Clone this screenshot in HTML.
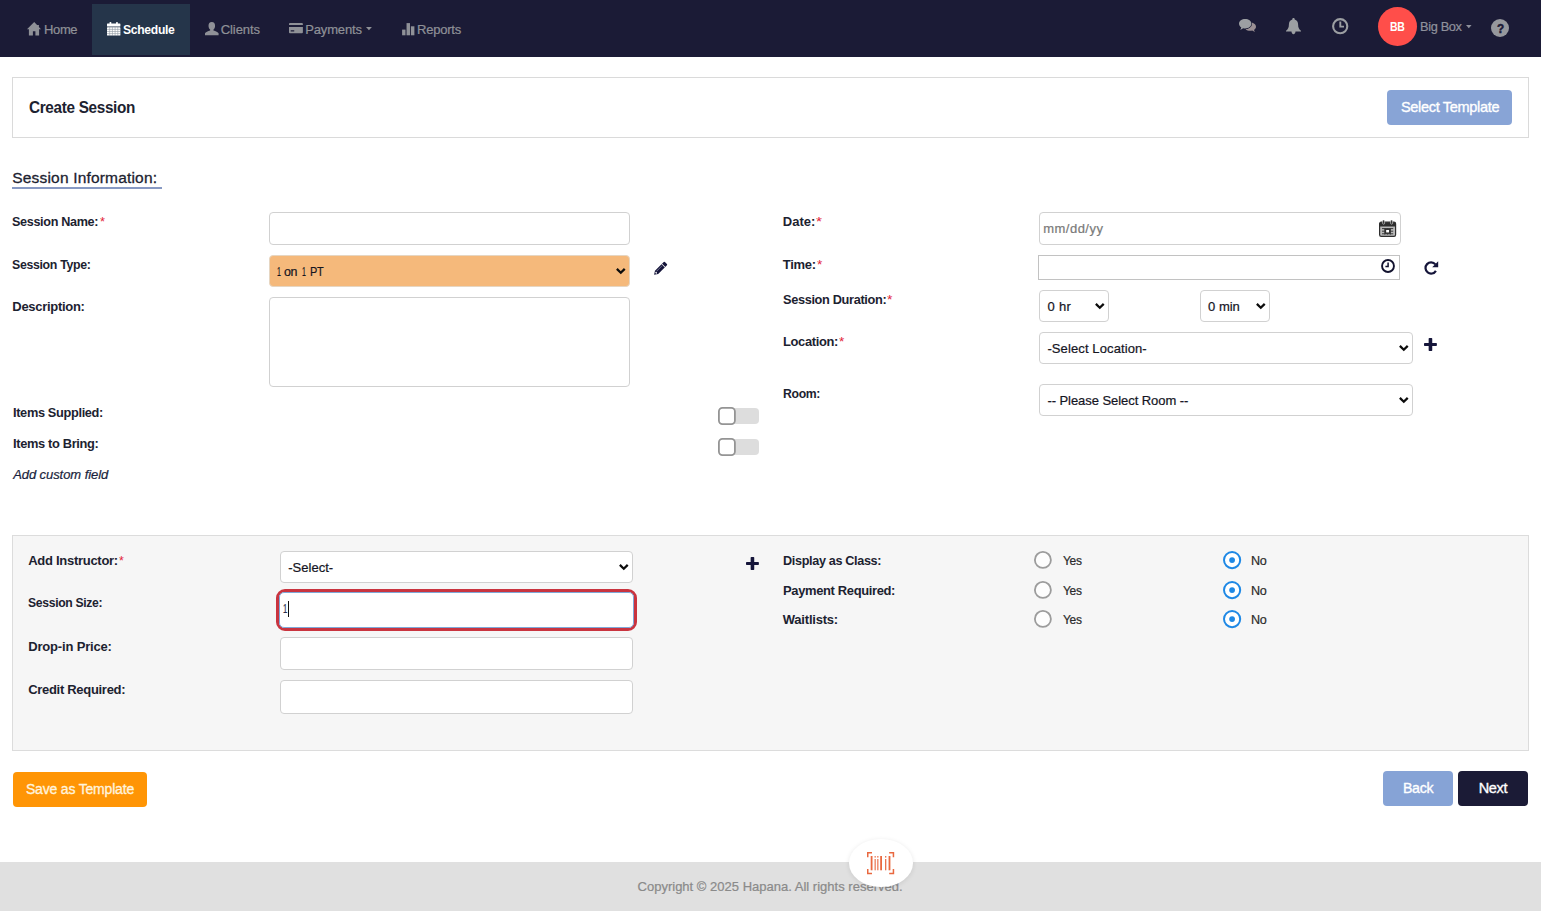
<!DOCTYPE html>
<html lang="en">
<head>
<meta charset="utf-8">
<title>Create Session</title>
<style>
*{box-sizing:border-box;margin:0;padding:0}
html,body{width:1541px;height:911px;overflow:hidden;background:#fff}
body{font-family:"Liberation Sans",sans-serif;color:#1c2230;position:relative}
.abs{position:absolute}
.t{position:absolute;white-space:nowrap;line-height:1;display:block}
.box{position:absolute;background:#fff;border:1px solid #d1d1d1;border-radius:4px}
svg{position:absolute;display:block;overflow:visible}
#nav{position:absolute;left:0;top:0;width:1541px;height:57px;background:#1b1b36}
</style>
</head>
<body>
<div id="nav"></div>
<div class="abs" style="left:92px;top:4px;width:98px;height:51px;background:#25354a"></div>
<svg style="left:27px;top:21.6px" width="14" height="13.5" viewBox="0 0 14 13.5"><path fill="#8f9197" d="M7.2 0 L0 7.2 L1.9 7.2 L1.9 13.5 L5.9 13.5 L5.9 9.2 L8.4 9.2 L8.4 13.5 L12.1 13.5 L12.1 7.2 L14 7.2 L11.9 4.9 L11.9 3.1 L10.3 3.1 L10.3 3.2 Z"/></svg>
<span class="t" style="left:43.50px;top:23.2px;font-size:13px;letter-spacing:-0.35px;transform:scaleX(0.999);transform-origin:0 0;color:#8f9197;-webkit-text-stroke:0.22px #8f9197;">Home</span>
<svg style="left:106.8px;top:21.5px" width="13.4" height="13.6" viewBox="0 0 13.4 13.6"><g fill="#fff"><rect x="0" y="1.4" width="13.4" height="3.2" rx="0.6"/><rect x="2.6" y="0" width="1.7" height="2.6" rx="0.6"/><rect x="9.1" y="0" width="1.7" height="2.6" rx="0.6"/><rect x="0" y="5.3" width="13.4" height="8.3" rx="0.6"/></g><g stroke="#25354a" stroke-width="0.6" opacity="0.5"><path d="M0 7.4H13.4M0 9.5H13.4M0 11.6H13.4M2.7 5.3V13.6M5.4 5.3V13.6M8.1 5.3V13.6M10.8 5.3V13.6"/></g></svg>
<span class="t" style="left:123.20px;top:23.2px;font-size:13px;letter-spacing:-0.35px;transform:scaleX(0.936);transform-origin:0 0;font-weight:bold;color:#ffffff;">Schedule</span>
<svg style="left:204.5px;top:21.8px" width="13.6" height="13.25" viewBox="0 0 13.5 13.6" preserveAspectRatio="none"><path fill="#8f9197" d="M6.75 0 C9 0 10 1.8 10 3.8 C10 5.6 9.3 7 8.4 7.8 L8.4 8.8 C10.5 9.6 13 10.3 13.5 11.6 L13.5 13.6 L0 13.6 L0 11.6 C0.5 10.3 3 9.6 5.1 8.8 L5.1 7.8 C4.2 7 3.5 5.6 3.5 3.8 C3.5 1.8 4.5 0 6.75 0 Z"/></svg>
<span class="t" style="left:220.70px;top:23.2px;font-size:13px;letter-spacing:-0.07px;color:#8f9197;-webkit-text-stroke:0.22px #8f9197;">Clients</span>
<svg style="left:289.2px;top:22.9px" width="13.9" height="10.2" viewBox="0 0 13.8 10.4" preserveAspectRatio="none"><path fill="#8f9197" d="M0.9 0 H12.9 Q13.8 0 13.8 0.9 V2 H0 V0.9 Q0 0 0.9 0 Z M0 4.1 H13.8 V9.5 Q13.8 10.4 12.9 10.4 H0.9 Q0 10.4 0 9.5 Z M1.7 7.4 V8.8 H5.2 V7.4 Z"/></svg>
<span class="t" style="left:305.30px;top:23.2px;font-size:13px;letter-spacing:-0.17px;color:#8f9197;-webkit-text-stroke:0.22px #8f9197;">Payments</span>
<svg style="left:365.5px;top:26.9px" width="5.9" height="3.3" viewBox="0 0 5.8 3.2" preserveAspectRatio="none"><path fill="#8f9197" d="M0 0H5.8L2.9 3.2Z"/></svg>
<svg style="left:401.8px;top:22.8px" width="12.4" height="12.3" viewBox="0 0 12.4 12.3"><g fill="#8f9197"><rect x="0.1" y="6.6" width="3.4" height="5.7"/><rect x="4.55" y="0.1" width="3.45" height="12.2"/><rect x="8.9" y="3.3" width="3.5" height="9"/></g></svg>
<span class="t" style="left:417.00px;top:23.2px;font-size:13px;letter-spacing:-0.22px;color:#8f9197;-webkit-text-stroke:0.22px #8f9197;">Reports</span>
<svg style="left:1239px;top:19px" width="17" height="13.2" viewBox="0 0 17 13.2"><path fill="#9a8f93" d="M11.2 3.6 C14.4 3.6 17 5.4 17 7.7 C17 9 16.2 10.1 15 10.9 L15.9 13 L13.2 11.6 C12.6 11.7 11.9 11.8 11.2 11.8 C9.3 11.8 7.6 11.2 6.6 10.2 C10 9.8 12.4 7.6 12.4 5 C12.4 4.5 12.3 4 12.1 3.6 Z"/><path fill="#9c9fa2" stroke="#1b1b36" stroke-width="1.3" paint-order="stroke" d="M6.2 0 C9.6 0 12.4 2.1 12.4 4.7 C12.4 7.3 9.6 9.4 6.2 9.4 C5.5 9.4 4.8 9.3 4.2 9.2 L1.3 10.9 L2.3 8.4 C0.9 7.5 0 6.2 0 4.7 C0 2.1 2.8 0 6.2 0 Z"/></svg>
<svg style="left:1286px;top:17.8px" width="15" height="16.2" viewBox="0 0 15 16.2"><path fill="#9c9fa2" d="M7.5 0 C8.2 0 8.7 0.5 8.7 1.2 L8.7 1.5 C10.9 2.1 12.1 4 12.1 6.6 C12.1 9.8 13.2 11.6 15 12.8 L15 13.6 L9.5 13.6 C9.5 15 8.7 16.2 7.5 16.2 C6.3 16.2 5.5 15 5.5 13.6 L0 13.6 L0 12.8 C1.8 11.6 2.9 9.8 2.9 6.6 C2.9 4 4.1 2.1 6.3 1.5 L6.3 1.2 C6.3 0.5 6.8 0 7.5 0 Z"/></svg>
<svg style="left:1331.5px;top:17.8px" width="16.4" height="16.4" viewBox="0 0 16.4 16.4"><circle cx="8.2" cy="8.2" r="7.1" fill="none" stroke="#9c9fa2" stroke-width="2.1"/><path d="M8.3 3.6V8.6H12" fill="none" stroke="#9c9fa2" stroke-width="1.9"/></svg>
<div class="abs" style="left:1378px;top:7px;width:39px;height:39px;border-radius:50%;background:#ff4e4a"></div>
<span class="t" style="left:1389.80px;top:19.9px;font-size:13px;letter-spacing:-0.35px;transform:scaleX(0.809);transform-origin:0 0;font-weight:bold;color:#ffffff;">BB</span>
<span class="t" style="left:1419.90px;top:19.9px;font-size:13px;letter-spacing:-0.35px;transform:scaleX(0.984);transform-origin:0 0;color:#8f919c;-webkit-text-stroke:0.22px #8f919c;">Big Box</span>
<svg style="left:1465.6px;top:25.1px" width="5.6" height="3.2" viewBox="0 0 5.6 3.2"><path fill="#8f919c" d="M0 0H5.6L2.8 3.2Z"/></svg>
<div class="abs" style="left:1491px;top:19px;width:18.40000000000009px;height:18.4px;border-radius:50%;background:#96989d"></div>
<span class="t" style="left:1496.60px;top:21.8px;font-size:13px;letter-spacing:0.00px;transform:scaleX(0.906);transform-origin:0 0;font-weight:bold;color:#1b1b36;-webkit-text-stroke:0.5px #1b1b36;">?</span>
<div class="abs" style="left:12px;top:77px;width:1517px;height:61px;border:1px solid #dadada;background:#fff"></div>
<span class="t" style="left:28.60px;top:99.2px;font-size:16.5px;letter-spacing:-0.35px;transform:scaleX(0.928);transform-origin:0 0;font-weight:bold;color:#1c2230;">Create Session</span>
<div class="abs" style="left:1387px;top:90px;width:125px;height:35px;border-radius:4px;background:#88a4d6"></div>
<span class="t" style="left:1400.50px;top:99.2px;font-size:15px;letter-spacing:-0.35px;transform:scaleX(0.970);transform-origin:0 0;color:#ffffff;-webkit-text-stroke:0.35px #fff;">Select Template</span>
<span class="t" style="left:12.30px;top:170.1px;font-size:15.5px;letter-spacing:0.18px;color:#1c2230;-webkit-text-stroke:0.3px #1c2230;">Session Information:</span>
<div class="abs" style="left:12px;top:186.8px;width:149.8px;height:2.0px;background:#8799c3"></div>
<span class="t" style="left:12.30px;top:214.9px;font-size:13px;letter-spacing:-0.35px;transform:scaleX(0.971);transform-origin:0 0;font-weight:bold;color:#1c2230;">Session Name:</span>
<span class="t" style="left:99.50px;top:215.2px;font-size:13px;letter-spacing:0.00px;transform:scaleX(0.989);transform-origin:0 0;color:#e3263a;">*</span>
<div class="box" style="left:269px;top:212px;width:361px;height:32.5px;"></div>
<span class="t" style="left:12.30px;top:258.1px;font-size:13px;letter-spacing:-0.35px;transform:scaleX(0.950);transform-origin:0 0;font-weight:bold;color:#1c2230;">Session Type:</span>
<div class="box" style="left:269px;top:255px;width:361px;height:32px;background:#f5b97b;border-color:#e6d6c2"></div>
<span class="t" style="left:277.30px;top:264.9px;font-size:13px;letter-spacing:0.00px;transform:scaleX(0.540);transform-origin:0 0;color:#15151f;-webkit-text-stroke:0.22px #15151f;">1</span>
<span class="t" style="left:284.40px;top:264.9px;font-size:13px;letter-spacing:-0.35px;transform:scaleX(0.957);transform-origin:0 0;color:#15151f;-webkit-text-stroke:0.22px #15151f;">on</span>
<span class="t" style="left:301.70px;top:264.9px;font-size:13px;letter-spacing:0.00px;transform:scaleX(0.540);transform-origin:0 0;color:#15151f;-webkit-text-stroke:0.22px #15151f;">1</span>
<span class="t" style="left:309.60px;top:264.9px;font-size:13px;letter-spacing:-0.35px;transform:scaleX(0.842);transform-origin:0 0;color:#15151f;-webkit-text-stroke:0.22px #15151f;">PT</span>
<svg style="left:615.7px;top:267.9px" width="9.6" height="6.2" viewBox="0 0 9.6 6.2"><path d="M0.85 0.95 L4.8 4.75 L8.75 0.95" fill="none" stroke="#0c0c0c" stroke-width="2.3"/></svg>
<svg style="left:650px;top:258px" width="22" height="20" viewBox="0 0 22 20"><g transform="translate(4.1,16.8) rotate(-45)"><path fill="#15153a" d="M0 0 L3.5 -2.25 H15.9 Q16.7 -2.25 16.7 -1.45 V1.45 Q16.7 2.25 15.9 2.25 H3.5 Z"/><ellipse cx="2.9" cy="0" rx="0.8" ry="0.9" fill="#fff"/><rect x="12.7" y="-2.4" width="0.8" height="4.8" fill="#fff"/><rect x="4.2" y="-1.0" width="8" height="0.55" fill="#8d8da8"/></g></svg>
<span class="t" style="left:12.30px;top:300.0px;font-size:13px;letter-spacing:-0.29px;font-weight:bold;color:#1c2230;">Description:</span>
<div class="box" style="left:269px;top:297px;width:361px;height:89.5px;"></div>
<span class="t" style="left:12.50px;top:405.7px;font-size:13px;letter-spacing:-0.35px;transform:scaleX(0.983);transform-origin:0 0;font-weight:bold;color:#1c2230;">Items Supplied:</span>
<span class="t" style="left:12.50px;top:436.8px;font-size:13px;letter-spacing:-0.35px;transform:scaleX(0.988);transform-origin:0 0;font-weight:bold;color:#1c2230;">Items to Bring:</span>
<span class="t" style="left:13.15px;top:467.6px;font-size:13px;letter-spacing:-0.07px;font-style:italic;color:#1a1f3d;-webkit-text-stroke:0.22px #1a1f3d;">Add custom field</span>
<div class="abs" style="left:720px;top:408.0px;width:39px;height:15.699999999999989px;border-radius:4px;background:#dddddd"></div>
<svg style="left:718px;top:406.9px" width="17.8" height="18.1" viewBox="0 0 17.8 18.1"><rect x="0.9" y="0.9" width="16" height="16.3" rx="3.6" fill="#fff" stroke="#949494" stroke-width="1.8"/></svg>
<div class="abs" style="left:720px;top:439.1px;width:39px;height:15.699999999999989px;border-radius:4px;background:#dddddd"></div>
<svg style="left:718px;top:438px" width="17.8" height="18.1" viewBox="0 0 17.8 18.1"><rect x="0.9" y="0.9" width="16" height="16.3" rx="3.6" fill="#fff" stroke="#949494" stroke-width="1.8"/></svg>
<span class="t" style="left:782.80px;top:214.9px;font-size:13px;letter-spacing:0.02px;font-weight:bold;color:#1c2230;">Date:</span>
<span class="t" style="left:816.20px;top:215.2px;font-size:13px;letter-spacing:0.00px;transform:scaleX(1.186);transform-origin:0 0;color:#e3263a;">*</span>
<div class="box" style="left:1039px;top:212px;width:361.5px;height:32.5px;"></div>
<span class="t" style="left:1043.20px;top:222.1px;font-size:13px;letter-spacing:0.49px;color:#7a7a7a;-webkit-text-stroke:0.22px #7a7a7a;">mm/dd/yy</span>
<svg style="left:1378.8px;top:219.8px" width="17.2" height="17" viewBox="0 0 17.2 17"><rect x="0.6" y="2.2" width="16" height="14.2" rx="1.6" fill="#b9b9b9" stroke="#2e2e2e" stroke-width="1.2"/><path d="M0.6 3.8 Q0.6 2.2 2.2 2.2 H15 Q16.6 2.2 16.6 3.8 V6.6 H0.6 Z" fill="#2e2e2e"/><rect x="3.6" y="0" width="2" height="4.2" rx="0.9" fill="#2e2e2e" stroke="#fff" stroke-width="0.5"/><rect x="11.6" y="0" width="2" height="4.2" rx="0.9" fill="#2e2e2e" stroke="#fff" stroke-width="0.5"/><path d="M3 8.6H14.2M3 11.2H14.2M3 13.8H14.2M5.8 8V14.6M8.6 8V14.6M11.4 8V14.6" stroke="#3a3a3a" stroke-width="1"/><rect x="6.5" y="9.3" width="4.2" height="3.8" fill="#fff" stroke="#2e2e2e" stroke-width="1.3"/></svg>
<span class="t" style="left:782.80px;top:258.1px;font-size:13px;letter-spacing:-0.28px;font-weight:bold;color:#1c2230;">Time:</span>
<span class="t" style="left:816.90px;top:258.4px;font-size:13px;letter-spacing:0.00px;transform:scaleX(1.048);transform-origin:0 0;color:#e3263a;">*</span>
<div class="abs" style="left:1038px;top:255px;width:362px;height:25px;border:1px solid #c2c2c2;border-radius:0;background:#fff"></div>
<svg style="left:1380.5px;top:259.2px" width="14" height="14" viewBox="0 0 14 14"><circle cx="7" cy="7" r="5.95" fill="none" stroke="#12122e" stroke-width="1.9"/><path d="M7.1 3.4V7.5H4.4" fill="none" stroke="#12122e" stroke-width="1.5"/></svg>
<svg style="left:1423.7px;top:261px" width="14.8" height="14" viewBox="0 0 14.8 14"><path d="M11.9 9.9 A5.6 5.6 0 1 1 11.4 3.4" fill="none" stroke="#15153a" stroke-width="2.2"/><path d="M14.2 0.2 V6.2 H8.2 Z" fill="#15153a"/></svg>
<span class="t" style="left:782.80px;top:292.8px;font-size:13px;letter-spacing:-0.35px;transform:scaleX(0.981);transform-origin:0 0;font-weight:bold;color:#1c2230;">Session Duration:</span>
<span class="t" style="left:887.20px;top:293.1px;font-size:13px;letter-spacing:0.00px;transform:scaleX(1.068);transform-origin:0 0;color:#e3263a;">*</span>
<div class="box" style="left:1039px;top:290px;width:69.59999999999991px;height:32px;"></div>
<span class="t" style="left:1047.50px;top:300.0px;font-size:13px;letter-spacing:0.33px;color:#15151f;-webkit-text-stroke:0.22px #15151f;">0 hr</span>
<svg style="left:1095.1px;top:303.1px" width="9.6" height="6.2" viewBox="0 0 9.6 6.2"><path d="M0.85 0.95 L4.8 4.75 L8.75 0.95" fill="none" stroke="#0c0c0c" stroke-width="2.3"/></svg>
<div class="box" style="left:1200.3px;top:290px;width:69.29999999999995px;height:32px;"></div>
<span class="t" style="left:1208.10px;top:300.0px;font-size:13px;letter-spacing:-0.02px;color:#15151f;-webkit-text-stroke:0.22px #15151f;">0 min</span>
<svg style="left:1255.9px;top:303.1px" width="9.6" height="6.2" viewBox="0 0 9.6 6.2"><path d="M0.85 0.95 L4.8 4.75 L8.75 0.95" fill="none" stroke="#0c0c0c" stroke-width="2.3"/></svg>
<span class="t" style="left:782.80px;top:334.9px;font-size:13px;letter-spacing:-0.35px;transform:scaleX(0.993);transform-origin:0 0;font-weight:bold;color:#1c2230;">Location:</span>
<span class="t" style="left:838.90px;top:335.2px;font-size:13px;letter-spacing:0.00px;transform:scaleX(1.048);transform-origin:0 0;color:#e3263a;">*</span>
<div class="box" style="left:1039px;top:332px;width:373.5999999999999px;height:32px;"></div>
<span class="t" style="left:1047.40px;top:342.0px;font-size:13px;letter-spacing:0.11px;color:#15151f;-webkit-text-stroke:0.22px #15151f;">-Select Location-</span>
<svg style="left:1398.9px;top:345.2px" width="9.6" height="6.2" viewBox="0 0 9.6 6.2"><path d="M0.85 0.95 L4.8 4.75 L8.75 0.95" fill="none" stroke="#0c0c0c" stroke-width="2.3"/></svg>
<svg style="left:1424.1px;top:338.2px" width="12.9" height="12.9" viewBox="0 0 12.9 12.9"><g fill="#15153a"><rect x="4.65" y="0" width="3.6" height="12.9" rx="0.7"/><rect x="0" y="4.9" width="12.9" height="3.1" rx="0.7"/></g></svg>
<span class="t" style="left:782.80px;top:386.9px;font-size:13px;letter-spacing:-0.35px;transform:scaleX(0.941);transform-origin:0 0;font-weight:bold;color:#1c2230;">Room:</span>
<div class="box" style="left:1039px;top:384px;width:373.5999999999999px;height:31.80000000000001px;"></div>
<span class="t" style="left:1047.40px;top:393.8px;font-size:13px;letter-spacing:-0.06px;color:#15151f;-webkit-text-stroke:0.22px #15151f;">-- Please Select Room --</span>
<svg style="left:1398.9px;top:396.9px" width="9.6" height="6.2" viewBox="0 0 9.6 6.2"><path d="M0.85 0.95 L4.8 4.75 L8.75 0.95" fill="none" stroke="#0c0c0c" stroke-width="2.3"/></svg>
<div class="abs" style="left:12px;top:535px;width:1517px;height:216px;border:1px solid #dcdcdc;background:#f6f6f6"></div>
<span class="t" style="left:28.20px;top:553.9px;font-size:13px;letter-spacing:-0.28px;font-weight:bold;color:#1c2230;">Add Instructor:</span>
<span class="t" style="left:119.00px;top:554.2px;font-size:13px;letter-spacing:0.00px;transform:scaleX(0.949);transform-origin:0 0;color:#e3263a;">*</span>
<div class="box" style="left:280px;top:551px;width:352.5px;height:31.600000000000023px;"></div>
<span class="t" style="left:288.20px;top:561.1px;font-size:13px;letter-spacing:0.02px;color:#15151f;-webkit-text-stroke:0.22px #15151f;">-Select-</span>
<svg style="left:619.2px;top:563.9px" width="9.6" height="6.2" viewBox="0 0 9.6 6.2"><path d="M0.85 0.95 L4.8 4.75 L8.75 0.95" fill="none" stroke="#0c0c0c" stroke-width="2.3"/></svg>
<svg style="left:746px;top:557px" width="12.9" height="12.9" viewBox="0 0 12.9 12.9"><g fill="#15153a"><rect x="4.65" y="0" width="3.6" height="12.9" rx="0.7"/><rect x="0" y="4.9" width="12.9" height="3.1" rx="0.7"/></g></svg>
<span class="t" style="left:28.20px;top:595.8px;font-size:13px;letter-spacing:-0.35px;transform:scaleX(0.937);transform-origin:0 0;font-weight:bold;color:#1c2230;">Session Size:</span>
<div class="abs" style="left:276px;top:589px;width:360.6px;height:41.60000000000002px;border:3px solid #c9343f;border-radius:9px;background:#fff"></div>
<div class="abs" style="left:279px;top:592px;width:354.6px;height:35.60000000000002px;border:1px solid #7fa8d8;border-radius:5px;background:#fff"></div>
<span class="t" style="left:283.20px;top:602.8px;font-size:12px;letter-spacing:0.00px;transform:scaleX(0.644);transform-origin:0 0;color:#2a2f4a;-webkit-text-stroke:0.22px #2a2f4a;">1</span>
<div class="abs" style="left:288px;top:601px;width:1.1999999999999886px;height:16px;background:#111"></div>
<span class="t" style="left:28.20px;top:640.0px;font-size:13px;letter-spacing:-0.17px;font-weight:bold;color:#1c2230;">Drop-in Price:</span>
<div class="box" style="left:280px;top:637px;width:352.5px;height:32.799999999999955px;"></div>
<span class="t" style="left:28.20px;top:682.9px;font-size:13px;letter-spacing:-0.30px;font-weight:bold;color:#1c2230;">Credit Required:</span>
<div class="box" style="left:280px;top:680px;width:352.5px;height:33.5px;"></div>
<span class="t" style="left:782.80px;top:553.9px;font-size:13px;letter-spacing:-0.35px;transform:scaleX(0.972);transform-origin:0 0;font-weight:bold;color:#1c2230;">Display as Class:</span>
<span class="t" style="left:782.80px;top:584.1px;font-size:13px;letter-spacing:-0.35px;transform:scaleX(0.996);transform-origin:0 0;font-weight:bold;color:#1c2230;">Payment Required:</span>
<span class="t" style="left:782.80px;top:613.1px;font-size:13px;letter-spacing:-0.22px;font-weight:bold;color:#1c2230;">Waitlists:</span>
<svg style="left:1034.1px;top:550.9px" width="17.8" height="17.8" viewBox="0 0 17.8 17.8"><circle cx="8.9" cy="8.9" r="8" fill="#fdfdfd" stroke="#9c9c9c" stroke-width="1.8"/></svg>
<span class="t" style="left:1062.50px;top:553.8px;font-size:13px;letter-spacing:-0.35px;transform:scaleX(0.922);transform-origin:0 0;color:#2b2b2b;-webkit-text-stroke:0.22px #2b2b2b;">Yes</span>
<svg style="left:1222.7px;top:550.7px" width="18.2" height="18.2" viewBox="0 0 18.2 18.2"><circle cx="9.1" cy="9.1" r="8.1" fill="#fff" stroke="#1e88e5" stroke-width="2"/><circle cx="9.1" cy="9.1" r="2.9" fill="#1e88e5"/></svg>
<span class="t" style="left:1251.30px;top:553.8px;font-size:13px;letter-spacing:-0.35px;transform:scaleX(0.971);transform-origin:0 0;color:#2b2b2b;-webkit-text-stroke:0.22px #2b2b2b;">No</span>
<svg style="left:1034.1px;top:581.0px" width="17.8" height="17.8" viewBox="0 0 17.8 17.8"><circle cx="8.9" cy="8.9" r="8" fill="#fdfdfd" stroke="#9c9c9c" stroke-width="1.8"/></svg>
<span class="t" style="left:1062.50px;top:583.9px;font-size:13px;letter-spacing:-0.35px;transform:scaleX(0.922);transform-origin:0 0;color:#2b2b2b;-webkit-text-stroke:0.22px #2b2b2b;">Yes</span>
<svg style="left:1222.7px;top:580.8px" width="18.2" height="18.2" viewBox="0 0 18.2 18.2"><circle cx="9.1" cy="9.1" r="8.1" fill="#fff" stroke="#1e88e5" stroke-width="2"/><circle cx="9.1" cy="9.1" r="2.9" fill="#1e88e5"/></svg>
<span class="t" style="left:1251.30px;top:583.9px;font-size:13px;letter-spacing:-0.35px;transform:scaleX(0.971);transform-origin:0 0;color:#2b2b2b;-webkit-text-stroke:0.22px #2b2b2b;">No</span>
<svg style="left:1034.1px;top:610.3px" width="17.8" height="17.8" viewBox="0 0 17.8 17.8"><circle cx="8.9" cy="8.9" r="8" fill="#fdfdfd" stroke="#9c9c9c" stroke-width="1.8"/></svg>
<span class="t" style="left:1062.50px;top:613.2px;font-size:13px;letter-spacing:-0.35px;transform:scaleX(0.922);transform-origin:0 0;color:#2b2b2b;-webkit-text-stroke:0.22px #2b2b2b;">Yes</span>
<svg style="left:1222.7px;top:610.1px" width="18.2" height="18.2" viewBox="0 0 18.2 18.2"><circle cx="9.1" cy="9.1" r="8.1" fill="#fff" stroke="#1e88e5" stroke-width="2"/><circle cx="9.1" cy="9.1" r="2.9" fill="#1e88e5"/></svg>
<span class="t" style="left:1251.30px;top:613.2px;font-size:13px;letter-spacing:-0.35px;transform:scaleX(0.971);transform-origin:0 0;color:#2b2b2b;-webkit-text-stroke:0.22px #2b2b2b;">No</span>
<div class="abs" style="left:13px;top:772px;width:134px;height:35px;border-radius:4px;background:#ff9505"></div>
<span class="t" style="left:25.90px;top:782.0px;font-size:14px;letter-spacing:-0.18px;color:#fff3dc;-webkit-text-stroke:0.35px #fff3dc;">Save as Template</span>
<div class="abs" style="left:1383px;top:771px;width:70px;height:35px;border-radius:4px;background:#86a3d6"></div>
<span class="t" style="left:1403.30px;top:780.7px;font-size:14.5px;letter-spacing:-0.35px;transform:scaleX(0.977);transform-origin:0 0;color:#ffffff;-webkit-text-stroke:0.35px #fff;">Back</span>
<div class="abs" style="left:1458px;top:771px;width:70px;height:35px;border-radius:4px;background:#1b1b36"></div>
<span class="t" style="left:1478.70px;top:780.7px;font-size:14.5px;letter-spacing:-0.34px;color:#ffffff;-webkit-text-stroke:0.35px #fff;">Next</span>
<div class="abs" style="left:0px;top:862px;width:1541px;height:49px;background:#e0e0e0"></div>
<span class="t" style="left:637.50px;top:880.1px;font-size:13px;letter-spacing:0.01px;color:#8a8a8a;-webkit-text-stroke:0.22px #8a8a8a;">Copyright © 2025 Hapana. All rights reserved.</span>
<div class="abs" style="left:848.8px;top:838.6px;width:64.0px;height:48.39999999999998px;border-radius:50%;background:#fff;box-shadow:0 1px 5px rgba(0,0,0,0.10)"></div>
<svg style="left:867.4px;top:851.7px" width="27.2" height="22.3" viewBox="0 0 27.2 22.3"><g fill="none" stroke="#e9683f" stroke-width="1.5"><path d="M5 0.75H0.75V5.2"/><path d="M22.2 0.75H26.45V5.2"/><path d="M5 21.55H0.75V17.1"/><path d="M22.2 21.55H26.45V17.1"/></g><g fill="#e9683f"><rect x="3.7" y="4" width="1.8" height="14.3"/><rect x="7.6" y="7" width="1.1" height="11.3"/><rect x="7.6" y="4" width="1.1" height="1.6"/><rect x="10.3" y="7" width="1.1" height="11.3"/><rect x="10.3" y="4" width="1.1" height="1.6"/><rect x="13.2" y="4" width="1.8" height="14.3"/><rect x="18.1" y="7" width="1.2" height="11.3"/><rect x="18.1" y="4" width="1.2" height="1.6"/><rect x="21.6" y="4" width="1.8" height="14.3"/></g></svg>
</body>
</html>
